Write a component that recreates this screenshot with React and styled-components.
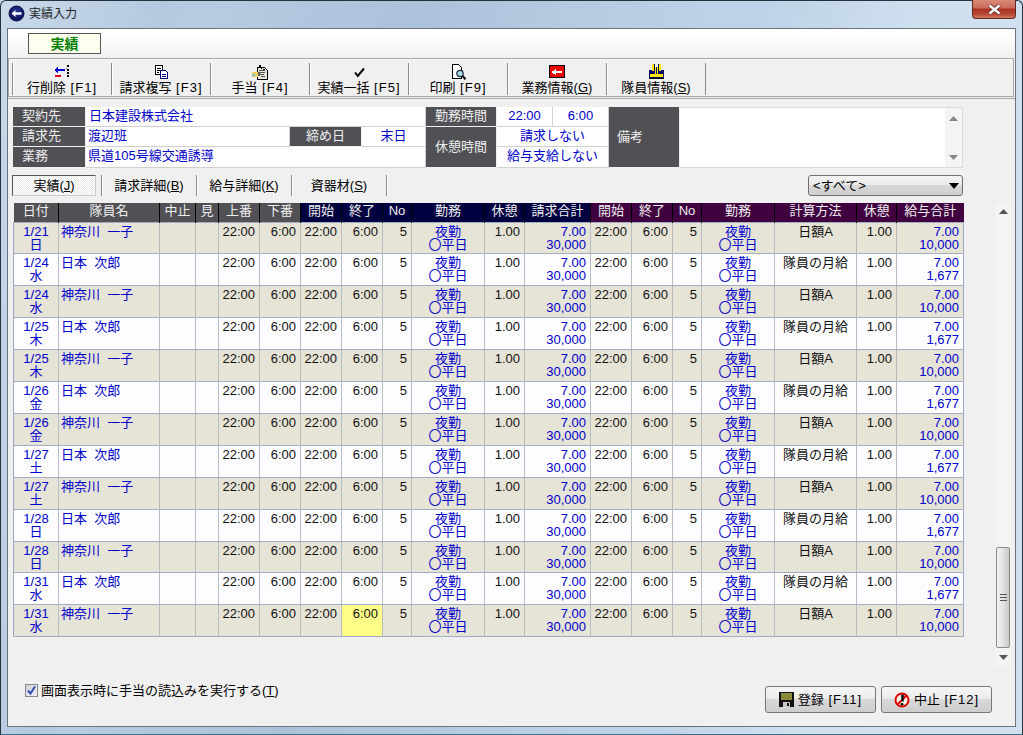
import React from "react";
import styled, { createGlobalStyle } from "styled-components";

const Global = createGlobalStyle`
  html, body { margin: 0; padding: 0; background: #c4d6e8; overflow: hidden; }
  * { box-sizing: border-box; }
  body { font-family: "Liberation Sans", "Noto Sans CJK JP", sans-serif; font-size: 13px; color: #000; }
`;

const Win = styled.div`
  width: 1023px; height: 735px; display: flex; flex-direction: column;
  padding: 0 6px 7px 6px;
  border: 1px solid #24323c; border-bottom-color: #3a6f8e; border-radius: 6px 6px 0 0;
  background: linear-gradient(100deg, #c9d9ea 0, #b4c9e0 14%, #b7cbe2 17%, #acc2da 36%, #bdd2e8 62%, #bdd2e8 66%, #cfe0ef 80%, #d2e1ef 100%);
`;
const TitleBar = styled.div`
  height: 27px; flex: none; display: flex; align-items: center; position: relative; padding: 0 0 2px 1px; gap: 4px;
`;
const TitleText = styled.span` font-size: 12px; line-height: 14px; color: #222; `;
const CloseBtn = styled.div`
  position: absolute; right: 0; top: -1px; width: 44px; height: 19px;
  display: flex; align-items: center; justify-content: center;
  border: 1px solid #5e2a22; border-top: 0; border-radius: 0 0 4px 4px;
  background: linear-gradient(#d98a78 0, #c96a58 45%, #ac3020 50%, #b84a38 80%, #d07a66 100%);
`;
const Client = styled.div`
  flex: 1; display: flex; flex-direction: column; background: #f0f0f0; border: 1px solid #6a7480; min-height: 0;
`;
const TabStrip = styled.div`
  height: 29px; flex: none; padding: 4px 0 0 20px;
  background: linear-gradient(#fff 0, #fff 20%, #f0f0f0 100%);
`;
const ActiveTab = styled.div`
  width: 73px; height: 21px; display: flex; align-items: center; justify-content: center;
  background: #fffff0; border: 1px solid #555; color: #008000; font-weight: 700; font-size: 14px; line-height: 16px;
`;
const Toolbar = styled.div`
  height: 39px; flex: none; margin-right: 1px; display: flex; align-items: center; padding-left: 3px;
  border: 1px solid #a8a8a8; box-shadow: inset 1px 1px 0 #fafafa;
`;
const ToolBtn = styled.div`
  width: 99px; height: 32px; flex: none; margin-top: 2px; display: flex; flex-direction: column; align-items: center; justify-content: flex-end;
  border-left: 1px solid #8a8a8a; box-shadow: inset 1px 0 0 #fff; line-height: 15px; white-space: nowrap;
  &:last-child { width: 1px; }
`;
const ToolIcon = styled.svg` display: block; width: 17px; height: 16px; flex: none; `;
const Key = styled.span` letter-spacing: 1px; margin-left: 1px; `;
const Rule = styled.div` height: 1px; flex: none; margin-top: 1px; background: #a8a8a8; `;
const Body = styled.div` flex: 1; padding: 8px 0 0 5px; display: flex; flex-direction: column; min-height: 0; `;

const Info = styled.div`
  width: 950px; height: 61px; flex: none; display: grid;
  grid-template-columns: 73px 204px 72px 64px 71px 56px 56px 71px 283px;
  grid-template-rows: 20px 20px 21px;
`;
const Label = styled.div`
  grid-row: span ${p => p.$rows || 1};
  background: #505055; color: #eee; display: flex; align-items: center;
  justify-content: ${p => p.$left ? "flex-start" : "center"};
  padding: 0 0 ${p => p.$rows ? 0 : 2}px ${p => p.$pad || 0}px; line-height: 14px;
  border-right: 1px solid #f0f0f0; border-bottom: 1px solid #f0f0f0; font-size: 13px;
`;
const Value = styled.div`
  grid-column: span ${p => p.$cols || 1};
  background: #fff; color: #0000cc; display: flex; align-items: center;
  justify-content: ${p => p.$left ? "flex-start" : "center"};
  padding: 0 0 2px ${p => p.$pad || 0}px; line-height: 14px;
  border-right: 1px solid #d0d0d0; border-bottom: 1px solid #d0d0d0; white-space: nowrap;
`;
const Memo = styled.div`
  grid-row: span 3; background: #fff; border: 1px solid #dcdcdc; border-left: 0; display: flex; justify-content: flex-end;
`;
const MemoBar = styled.div`
  width: 17px; display: flex; flex-direction: column; justify-content: space-between; align-items: center;
  background: #f4f4f4; padding: 8px 0 7px;
`;
const TabRow = styled.div` width: 951px; height: 21px; flex: none; margin: 7px 0 0 -1px; display: flex; align-items: center; line-height: 14px; `;
const TabOn = styled.div`
  width: 84px; height: 21px; display: flex; align-items: center; justify-content: center;
  border: 1px solid; border-color: #555 #ccc #ccc #555;
  background: repeating-conic-gradient(#fff 0 25%, #ececec 0 50%) 0 0 / 2px 2px;
`;
const Sep = styled.div` width: 1px; height: 21px; flex: none; background: #8a8a8a; margin-left: ${p => p.$ml || 0}px; box-shadow: 1px 0 0 #fff; `;
const TabBtn = styled.div` width: 94px; text-align: center; white-space: nowrap; `;
const Select = styled.div`
  width: 155px; height: 21px; margin-left: auto; display: flex; align-items: center; justify-content: space-between;
  padding: 0 3px 0 4px; border: 1px solid #707070; border-radius: 3px;
  background: linear-gradient(#f4f4f4 0, #ebebeb 45%, #d8d8d8 50%, #cfcfcf 100%);
`;
const Main = styled.div` height: 464px; flex: none; margin-top: 7px; display: flex; align-items: flex-start; `;

const Table = styled.table`
  width: 950px; flex: none; table-layout: fixed; border-collapse: collapse; border-spacing: 0;
`;
const Th = styled.th`
  height: 19px; padding: 0 0 2px; font-weight: 400; font-size: 13px; line-height: 14px; color: #eee; white-space: nowrap;
  background: ${p => p.$bg}; border-right: 1px solid #000;
  &:last-child { border-right: 0; }
`;
const Tr = styled.tr` height: 31.92px; background: ${p => p.$odd ? "#e6e3d7" : "#fdfdff"}; `;
const Td = styled.td`
  padding: 2px ${p => p.$align === "right" ? 4 : 0}px 0 ${p => p.$align === "left" ? 2 : 0}px;
  vertical-align: top; line-height: 13px; font-size: 13px; white-space: pre-line; overflow: hidden;
  text-align: ${p => p.$align || "center"};
  color: ${p => p.$blue ? "#0000cc" : "#111"};
  background: ${p => p.$hl ? "#ffff88" : "transparent"};
  border: 1px solid #b9bcc0;
  border-bottom-color: #a3aec4; border-top-color: #a3aec4;
  ${p => p.$strong ? "border-left-color: #9aaac4;" : ""}
  &:first-child { border-left-color: #9aaac4; }
  &:last-child { border-right-color: #9aaac4; }
`;

const Bar = styled.div`
  width: 16px; height: 464px; flex: none; margin-left: 31px; display: flex; flex-direction: column; align-items: center;
  background: #f4f4f4;
`;
const BarEnd = styled.div` height: ${p => p.$h}px; flex: none; display: flex; align-items: center; `;
const Thumb = styled.div`
  width: 14px; height: 101px; flex: none; margin-top: auto; display: flex; align-items: center; justify-content: center;
  border: 1px solid #8a8a8a; border-radius: 2px;
  background: linear-gradient(90deg, #f4f4f4, #e2e2e2 50%, #c8c8c8);
`;
const Grip = styled.div` width: 7px; height: 7px; border-top: 1px solid #555; border-bottom: 1px solid #555; position: relative;
  &::after { content: ""; position: absolute; left: 0; right: 0; top: 2px; height: 1px; background: #555; }
`;
const Footer = styled.div` flex: 1; display: flex; align-items: flex-start; justify-content: space-between; padding: 0 23px 0 12px; `;
const Check = styled.label` display: flex; align-items: center; gap: 3px; margin-top: 17px; white-space: nowrap; line-height: 13px; `;
const Box = styled.span`
  width: 13px; height: 13px; display: flex; align-items: center; justify-content: center;
  border: 1px solid #8a8a8a; background: linear-gradient(135deg, #cfcfd8, #f2f2f6);
`;
const Buttons = styled.div` display: flex; gap: 5px; margin-top: 19px; `;
const Btn = styled.div`
  width: 111px; height: 27px; display: flex; align-items: center; justify-content: center; gap: 4px;
  border: 1px solid #777; border-radius: 3px; white-space: nowrap; line-height: 14px;
  background: linear-gradient(#f6f6f6 0, #ececec 45%, #d9d9d9 50%, #cdcdcd 100%);
`;
const Up = ({ c = "#555" }) => <svg width="9" height="5" viewBox="0 0 9 5"><path d="M4.5 0L9 5H0z" fill={c} /></svg>;
const Down = ({ c = "#555" }) => <svg width="9" height="5" viewBox="0 0 9 5"><path d="M0 0H9L4.5 5z" fill={c} /></svg>;

const CRISP = { shapeRendering: "crispEdges" };
const icons = {
  del: (
    <ToolIcon viewBox="0 0 17 16" style={CRISP}>
      <path d="M1 5h10v2H1zM3 3h1v6H3zM2 4h1v4H2z" fill="#0000e0" />
      <path d="M1 11h6v2H1z" fill="#e00020" />
      <path d="M13 1h2v2h-2zM13 5h2v2h-2zM13 8h2v2h-2zM13 11h2v2h-2z" fill="#000" />
      <path d="M12 4h1v1h-1z" fill="#c02040" />
    </ToolIcon>
  ),
  copy: (
    <ToolIcon viewBox="0 0 17 16" style={CRISP}>
      <path d="M2.5 1.5h7v9h-7z" fill="#fff" stroke="#000" />
      <path d="M4 4h4M4 6h3M4 8h2" stroke="#000" />
      <path d="M7.5 6.5h5l2 2v6h-7z" fill="#fff" stroke="#000080" />
      <path d="M9 10h4M9 12h4" stroke="#000080" />
    </ToolIcon>
  ),
  hand: (
    <ToolIcon viewBox="0 0 17 16" style={CRISP}>
      <path d="M5.5 3.5h7l3 3v9h-10z" fill="#e8e8d8" stroke="#000" />
      <path d="M7 1h2v2H7zM9 3h1v2H9zM11 5h2v1h-2z" fill="#000" />
      <path d="M7 6h6M8 8h5M8 10h4M9 12h4" stroke="#555" />
      <path d="M0 8h6v5H0z" fill="#f4d060" />
      <path d="M0 10h3v2H0z" fill="#70c8d8" />
      <path d="M6 8h2v4H6z" fill="#000" opacity=".6" />
    </ToolIcon>
  ),
  check: (
    <ToolIcon viewBox="0 0 17 16">
      <path d="M4 8.5l2.8 3.5L13 4.5" fill="none" stroke="#000" strokeWidth="2" />
    </ToolIcon>
  ),
  print: (
    <ToolIcon viewBox="0 0 17 16">
      <path d="M2.5.5h6l3 3v11h-9z" fill="#fff" stroke="#000" style={CRISP} />
      <circle cx="10" cy="9.5" r="3.2" fill="#a8e0e0" stroke="#224" strokeWidth="1.2" />
      <path d="M12.5 12l3 3.2" stroke="#000" strokeWidth="2" />
    </ToolIcon>
  ),
  back: (
    <ToolIcon viewBox="0 0 17 16" style={CRISP}>
      <path d="M.5 1.5h15v12H.5z" fill="#ee0000" stroke="#000" />
      <path d="M3 7h10v2H3zM5 6h1v4H5zM6 5h1v6H6zM4 6.5h1v3H4z" fill="#fff" />
    </ToolIcon>
  ),
  vest: (
    <ToolIcon viewBox="0 0 17 16" style={CRISP}>
      <path d="M1 6h3V0h3v3h3V0h3v6h3v9H1z" fill="#000060" />
      <path d="M4 0h2v7H4zM11 0h2v7h-2zM2 10h13v3H2z" fill="#ffe800" />
      <path d="M7 3h1v7H7zM9 3h1v7H9z" fill="#ffe800" />
      <path d="M1 14h15v1H1z" fill="#000" />
    </ToolIcon>
  ),
};

const tools = [
  ["del", <span>行削除 <Key>[F1]</Key></span>],
  ["copy", <span>請求複写 <Key>[F3]</Key></span>],
  ["hand", <span>手当 <Key>[F4]</Key></span>],
  ["check", <span>実績一括 <Key>[F5]</Key></span>],
  ["print", <span>印刷 <Key>[F9]</Key></span>],
  ["back", <span>業務情報(<u>G</u>)</span>],
  ["vest", <span>隊員情報(<u>S</u>)</span>],
];

const cols = [45, 101, 36, 23, 41, 41, 41, 41, 29, 73, 40, 66, 41, 41, 29, 73, 82, 40, 67];
const G = "#505055", N = "#000040", P = "#400040";
const heads = [
  ["日付", G], ["隊員名", G], ["中止", G], ["見", G], ["上番", G], ["下番", G],
  ["開始", N], ["終了", N], ["No", N], ["勤務", N], ["休憩", N], ["請求合計", N],
  ["開始", P], ["終了", P], ["No", P], ["勤務", P], ["計算方法", P], ["休憩", P], ["給与合計", P],
];
const dates = [["1/21", "日"], ["1/24", "水"], ["1/24", "水"], ["1/25", "木"], ["1/25", "木"], ["1/26", "金"], ["1/26", "金"], ["1/27", "土"], ["1/27", "土"], ["1/28", "日"], ["1/28", "日"], ["1/31", "水"], ["1/31", "水"]];
const KAN = "神奈川\u00a0\u00a0一子", NIH = "日本\u00a0\u00a0次郎";
const DUTY = "夜勤\n〇平日";

const Row = ({ d, i }) => {
  const odd = i % 2 === 0;
  return (
    <Tr $odd={odd}>
      <Td $blue>{d[0]}{"\n"}{d[1]}</Td>
      <Td $blue $align="left">{odd ? KAN : NIH}</Td>
      <Td /><Td />
      <Td $align="right">22:00</Td>
      <Td $align="right">6:00</Td>
      <Td $align="right" $strong>22:00</Td>
      <Td $align="right" $hl={i === 12}>6:00</Td>
      <Td $align="right">5</Td>
      <Td $blue>{DUTY}</Td>
      <Td $align="right">1.00</Td>
      <Td $align="right" $blue>{"7.00\n30,000"}</Td>
      <Td $align="right" $strong>22:00</Td>
      <Td $align="right">6:00</Td>
      <Td $align="right">5</Td>
      <Td $blue>{DUTY}</Td>
      <Td>{odd ? "日額A" : "隊員の月給"}</Td>
      <Td $align="right">1.00</Td>
      <Td $align="right" $blue>{`7.00\n${odd ? "10,000" : "1,677"}`}</Td>
    </Tr>
  );
};

export default function App() {
  return (
    <>
      <Global />
      <Win>
        <TitleBar>
          <svg width="17" height="17" viewBox="0 0 17 17">
            <circle cx="8.5" cy="8.5" r="7.5" fill="#10186a" stroke="#0a0f3c" />
            <circle cx="8.5" cy="7" r="5" fill="#2a3a9a" opacity=".6" />
            <path d="M3.5 8.5L7.5 5v2.2h6v2.6h-6V12z" fill="#fff" />
          </svg>
          <TitleText>実績入力</TitleText>
          <CloseBtn>
            <svg width="15" height="11" viewBox="0 0 15 11">
              <path d="M2.5 1.5l10 8M12.5 1.5l-10 8" stroke="#5a2a24" strokeWidth="4" />
              <path d="M2.5 1.5l10 8M12.5 1.5l-10 8" stroke="#fff" strokeWidth="2.4" />
            </svg>
          </CloseBtn>
        </TitleBar>
        <Client>
          <TabStrip><ActiveTab>実績</ActiveTab></TabStrip>
          <Toolbar>
            {tools.map(([k, label]) => (
              <ToolBtn key={k}>{icons[k]}{label}</ToolBtn>
            ))}
            <ToolBtn />
          </Toolbar>
          <Rule />
          <Body>
            <Info>
              <Label $left $pad={9}>契約先</Label>
              <Value $cols={3} $left $pad={3}>日本建設株式会社</Value>
              <Label>勤務時間</Label>
              <Value>22:00</Value>
              <Value>6:00</Value>
              <Label $rows={3} $left $pad={8}>備考</Label>
              <Memo><MemoBar><Up c="#888" /><Down c="#888" /></MemoBar></Memo>
              <Label $left $pad={9}>請求先</Label>
              <Value $left $pad={2}>渡辺班</Value>
              <Label>締め日</Label>
              <Value>末日</Value>
              <Label $rows={2}>休憩時間</Label>
              <Value $cols={2}>請求しない</Value>
              <Label $left $pad={9}>業務</Label>
              <Value $cols={3} $left $pad={2}>県道105号線交通誘導</Value>
              <Value $cols={2}>給与支給しない</Value>
            </Info>
            <TabRow>
              <TabOn>実績(<u>J</u>)</TabOn>
              <Sep $ml={5} />
              <TabBtn>請求詳細(<u>B</u>)</TabBtn>
              <Sep />
              <TabBtn>給与詳細(<u>K</u>)</TabBtn>
              <Sep />
              <TabBtn>資器材(<u>S</u>)</TabBtn>
              <Sep />
              <Select>
                <span>{"<すべて>"}</span>
                <svg width="10" height="6" viewBox="0 0 10 6"><path d="M0 0H10L5 6z" fill="#000" /></svg>
              </Select>
            </TabRow>
            <Main>
              <Table>
                <colgroup>{cols.map((w, i) => <col key={i} style={{ width: w }} />)}</colgroup>
                <thead>
                  <tr>{heads.map(([t, c], i) => <Th key={i} $bg={c}>{t}</Th>)}</tr>
                </thead>
                <tbody>
                  {dates.map((d, i) => <Row key={i} d={d} i={i} />)}
                </tbody>
              </Table>
              <Bar>
                <BarEnd $h={17}><Up /></BarEnd>
                <Thumb><Grip /></Thumb>
                <BarEnd $h={19}><Down /></BarEnd>
              </Bar>
            </Main>
            <Footer>
              <Check>
                <Box>
                  <svg width="11" height="11" viewBox="0 0 11 11"><path d="M2 5.5l2.5 3L9 1.5" fill="none" stroke="#3050b0" strokeWidth="2" /></svg>
                </Box>
                <span>画面表示時に手当の読込みを実行する(<u>T</u>)</span>
              </Check>
              <Buttons>
                <Btn>
                  <svg width="15" height="15" viewBox="0 0 15 15" style={CRISP}>
                    <path d="M0 0h15v15H0z" fill="#111" />
                    <path d="M2 1h11v7H2z" fill="#8a8a3a" />
                    <path d="M4 10h7v5H4z" fill="#c8c8c8" />
                    <path d="M8 11h2v3H8z" fill="#111" />
                  </svg>
                  <span>登録 <Key>[F11]</Key></span>
                </Btn>
                <Btn>
                  <svg width="16" height="16" viewBox="0 0 16 16">
                    <circle cx="8" cy="8" r="6.5" fill="#f4f0e8" stroke="#e00000" strokeWidth="2" />
                    <path d="M3.5 12.5l9-9" stroke="#e00000" strokeWidth="2" />
                    <path d="M8.5 2.5v7" stroke="#000" strokeWidth="2.4" />
                    <circle cx="8" cy="12.3" r="1.4" fill="#000" />
                  </svg>
                  <span>中止 <Key>[F12]</Key></span>
                </Btn>
              </Buttons>
            </Footer>
          </Body>
        </Client>
      </Win>
    </>
  );
}
